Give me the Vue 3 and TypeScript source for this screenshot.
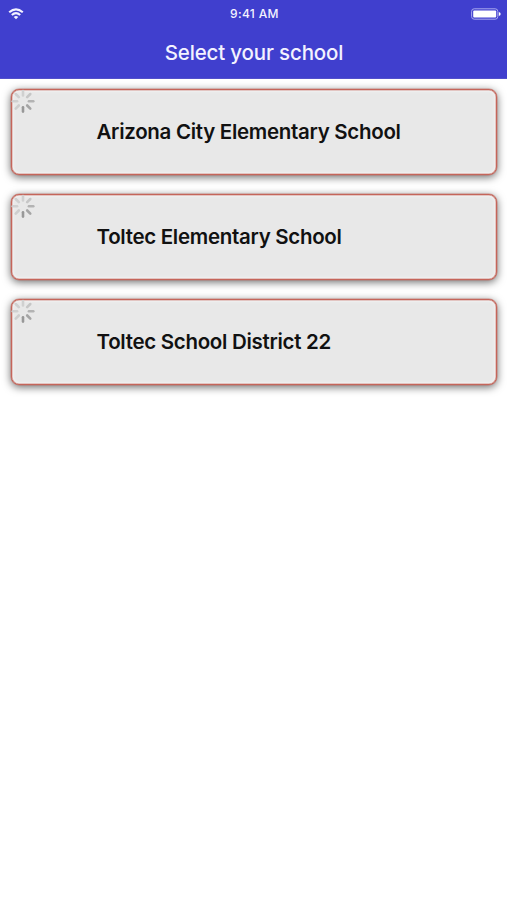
<script setup lang="ts">
interface School {
  id: number
  name: string
}

interface Spoke {
  angle: number
  color: string
}

const schools: School[] = [
  { id: 1, name: 'Arizona City Elementary School' },
  { id: 2, name: 'Toltec Elementary School' },
  { id: 3, name: 'Toltec School District 22' },
]

// Spokes run clockwise from the top of the activity indicator.
const spokes: Spoke[] = [
  { angle: 0, color: '#d0d0d0' },
  { angle: 45, color: '#c6c6c6' },
  { angle: 90, color: '#b3b3b3' },
  { angle: 135, color: '#a5a5a5' },
  { angle: 180, color: '#989898' },
  { angle: 225, color: '#cecece' },
  { angle: 270, color: '#d0d0d0' },
  { angle: 315, color: '#d0d0d0' },
]
</script>

<template>
  <div class="screen">
    <header class="header">
      <div class="status">
        <svg class="wifi" width="16" height="12" viewBox="0 0 16 12" aria-hidden="true">
          <path d="M1.2 4.3Q8 -1.7 14.8 4.3" />
          <path d="M3.8 7Q8 3.3 12.2 7" />
          <path class="dot" d="M5.7 8.9Q8 7.1 10.3 8.9L8 11.3Z" />
        </svg>
        <time class="clock">9:41 AM</time>
        <svg class="battery" width="30" height="12" viewBox="0 0 30 12" aria-hidden="true">
          <rect class="shell" x="0.6" y="0.8" width="26.2" height="10.4" rx="2.6" />
          <rect class="charge" x="2.2" y="2.5" width="23" height="7" rx="1" />
          <path class="charge" d="M27.8 4Q29.7 4.4 29.7 6T27.8 8Z" />
        </svg>
      </div>
      <h1 class="title">Select your school</h1>
    </header>
    <main class="list">
      <button v-for="school in schools" :key="school.id" class="card" type="button">
        <svg class="spinner" width="24" height="24" viewBox="-12 -12.3 24 24" aria-hidden="true">
          <line
            v-for="spoke in spokes"
            :key="spoke.angle"
            x1="0"
            y1="-5.9"
            x2="0"
            y2="-10.3"
            :stroke="spoke.color"
            :transform="`rotate(${spoke.angle})`"
          />
        </svg>
        <span class="name">{{ school.name }}</span>
      </button>
    </main>
  </div>
</template>

<style>
body {
  background: #fff;
}
</style>

<style scoped>
.screen {
  min-height: 900px;
  background: #fff;
  font-family: Inter, Roboto, sans-serif;
}

.header {
  box-sizing: border-box;
  height: 79px;
  background: #403fce;
  border-bottom: 1px solid #5250cb;
  color: #f3f2ff;
}

.status {
  display: grid;
  grid-template-columns: 1fr auto 1fr;
  align-items: center;
  height: 28px;
  padding: 0 6px 0 8px;
}

.wifi path {
  fill: none;
  stroke: #f3f2ff;
  stroke-width: 2.1;
}

.wifi .dot {
  fill: #f3f2ff;
  stroke: none;
}

.clock {
  font-size: 12px;
  font-weight: 500;
  line-height: 28px;
  letter-spacing: 0.35px;
}

.battery {
  justify-self: end;
}

.shell {
  fill: none;
  stroke: #a9a8ee;
  stroke-width: 1;
}

.charge {
  fill: #fff;
}

.title {
  margin: 0;
  padding-left: 1px;
  font-size: 20.5px;
  font-weight: 500;
  line-height: 49px;
  letter-spacing: -0.15px;
  text-align: center;
}

.list {
  display: flex;
  flex-direction: column;
  gap: 19px;
  padding: 10px 10px 0 11px;
}

.card {
  display: flex;
  align-items: center;
  box-sizing: border-box;
  height: 86px;
  margin: 0;
  padding: 0;
  border: 1px solid #c5655a;
  border-radius: 8px;
  background: #e8e8e8;
  box-shadow:
    0 0 0 0.5px rgba(197, 101, 90, 0.6),
    0 2px 9px rgba(0, 0, 0, 0.6),
    inset 0 0 0 0.5px rgba(197, 101, 90, 0.6),
    inset 0 0 2px 2px #f0f0f0;
  color: #111;
  font-family: inherit;
  text-align: left;
}

.spinner {
  flex: none;
  align-self: flex-start;
  margin: -1px 0 0 -1px;
}

.spinner line {
  stroke-width: 2.6;
  stroke-linecap: round;
}

.name {
  margin-left: 61.5px;
  font-size: 20.5px;
  font-weight: 600;
  line-height: 26px;
  letter-spacing: -0.3px;
  white-space: nowrap;
}
</style>
